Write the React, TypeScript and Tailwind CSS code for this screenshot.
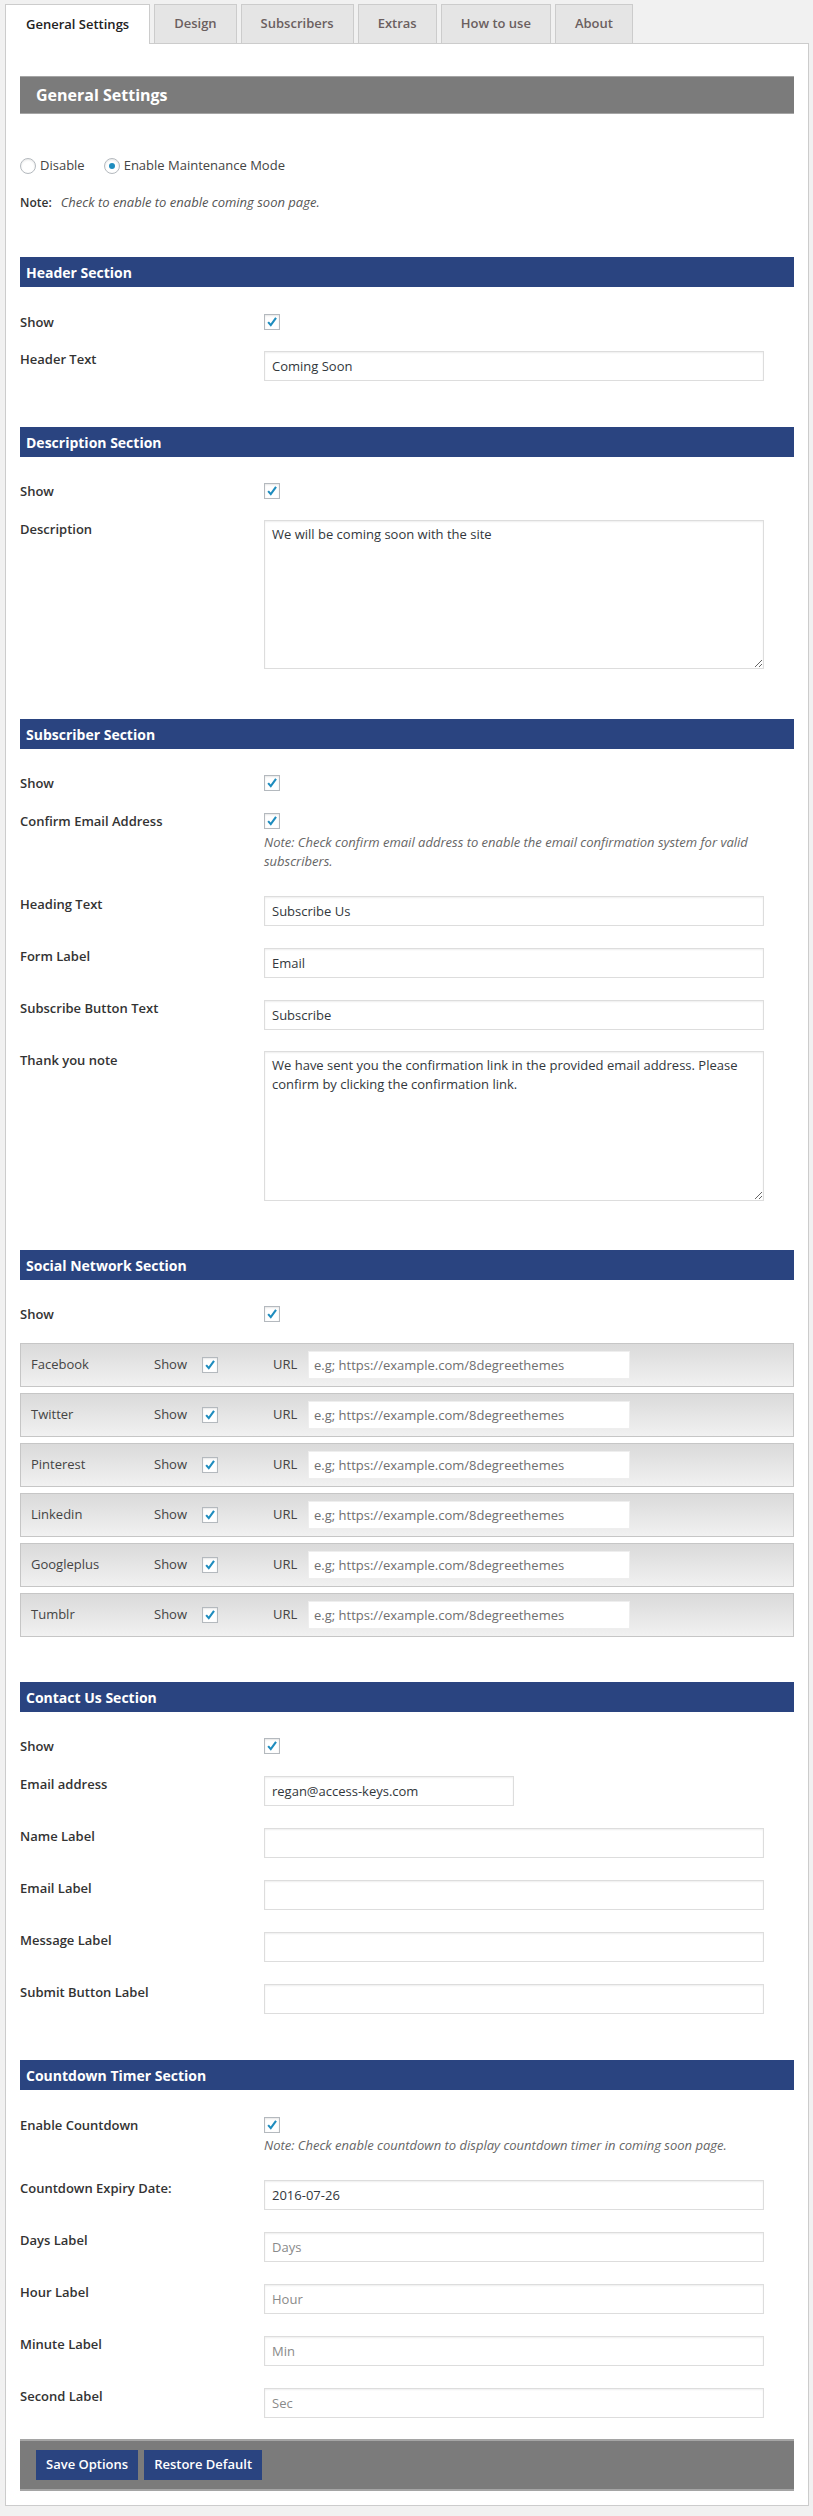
import React from "react";

const Check = () => (
  <span className="flex h-[16px] w-[16px] items-center justify-center border border-[#b4b9be] bg-white shadow-[inset_0_1px_2px_rgba(0,0,0,0.1)]">
    <svg width="14" height="14" viewBox="0 0 16 16">
      <path d="M3.6 8.2 L6.6 11.6 L12.6 3.4" fill="none" stroke="#1e8cbe" strokeWidth="2.4" strokeLinejoin="miter" />
    </svg>
  </span>
);

const Bar = ({ title, mt }: { title: string; mt: string }) => (
  <div className={`${mt} flex h-[30px] items-center bg-[#2a4480] pl-[6px] text-[14px] font-bold text-white`}>{title}</div>
);

const CheckRow = ({ label, mt, note }: { label: string; mt: string; note?: React.ReactNode }) => (
  <div className={`${mt} flex items-start`}>
    <div className="w-[244px] shrink-0 text-[13px] font-semibold leading-[16px] text-[#333]">{label}</div>
    <div className="flex flex-col">
      <Check />
      {note}
    </div>
  </div>
);

const InputRow = ({
  label,
  mt,
  value,
  placeholder,
  w = "w-[500px]",
}: {
  label: string;
  mt: string;
  value?: string;
  placeholder?: string;
  w?: string;
}) => (
  <div className={`${mt} flex items-start`}>
    <div className="w-[244px] shrink-0 text-[13px] font-semibold leading-[16px] text-[#333]">{label}</div>
    <input
      readOnly
      value={value ?? ""}
      placeholder={placeholder}
      className={`${w} h-[30px] border border-[#ddd] bg-white px-[7px] text-[13px] text-[#32373c] shadow-[inset_0_1px_2px_rgba(0,0,0,0.07)] outline-none placeholder:text-[#8a8a8a]`}
    />
  </div>
);

const TextRow = ({ label, mt, value, h }: { label: string; mt: string; value: string; h: string }) => (
  <div className={`${mt} flex items-start`}>
    <div className="w-[244px] shrink-0 pt-[1px] text-[13px] font-semibold leading-[16px] text-[#333]">{label}</div>
    <textarea
      readOnly
      value={value}
      className={`${h} w-[500px] border border-[#ddd] bg-white px-[7px] py-[4px] text-[13px] leading-[19px] text-[#32373c] shadow-[inset_0_1px_2px_rgba(0,0,0,0.07)] outline-none`}
    />
  </div>
);

const socials = ["Facebook", "Twitter", "Pinterest", "Linkedin", "Googleplus", "Tumblr"];

const tabs = ["General Settings", "Design", "Subscribers", "Extras", "How to use", "About"];

export default function App() {
  return (
    <div className="min-h-[2516px] bg-[#f1f1f1] pb-[10px] pl-[5px] pr-[4px] pt-[4px] font-['Open_Sans',sans-serif] text-[13px] text-[#333]">
      <div className="flex items-end gap-[4px]">
        {tabs.map((t, i) =>
          i === 0 ? (
            <div
              key={t}
              className="relative z-10 -mb-px flex h-[40px] items-center border border-b-0 border-[#ccc] bg-white px-[20px] text-[13px] font-semibold text-[#222]"
            >
              {t}
            </div>
          ) : (
            <div
              key={t}
              className="flex h-[39px] items-center border border-b-0 border-[#ccc] bg-[#e5e5e5] px-[19px] text-[13px] font-semibold text-[#6b5f5f]"
            >
              {t}
            </div>
          )
        )}
      </div>
      <div className="border border-[#ccc] bg-white px-[14px] pb-[14px] pt-[32px]">
        <div className="flex h-[38px] items-center border-y border-[#a5a5a5] bg-[#7b7b7b] pl-[16px] text-[16px] font-bold text-white">
          General Settings
        </div>
        <div className="mt-[44px] flex h-[16px] items-center text-[13px] text-[#444]">
          <span className="h-[16px] w-[16px] rounded-full border border-[#b4b9be] bg-white shadow-[inset_0_1px_2px_rgba(0,0,0,0.1)]" />
          <span className="ml-[4px]">Disable</span>
          <span className="ml-[19px] flex h-[16px] w-[16px] items-center justify-center rounded-full border border-[#b4b9be] bg-white shadow-[inset_0_1px_2px_rgba(0,0,0,0.1)]">
            <span className="h-[6px] w-[6px] rounded-full bg-[#1e8cbe]" />
          </span>
          <span className="ml-[4px]">Enable Maintenance Mode</span>
        </div>
        <div className="mt-[20px] flex h-[18px] items-center">
          <span className="text-[12px] font-semibold text-[#333]">Note:</span>
          <span className="ml-[9px] text-[13px] italic text-[#555]">Check to enable to enable coming soon page.</span>
        </div>

        <Bar title="Header Section" mt="mt-[45px]" />
        <CheckRow label="Show" mt="mt-[27px]" />
        <InputRow label="Header Text" mt="mt-[21px]" value="Coming Soon" />

        <Bar title="Description Section" mt="mt-[46px]" />
        <CheckRow label="Show" mt="mt-[26px]" />
        <TextRow label="Description" mt="mt-[21px]" value="We will be coming soon with the site" h="h-[149px]" />

        <Bar title="Subscriber Section" mt="mt-[50px]" />
        <CheckRow label="Show" mt="mt-[26px]" />
        <CheckRow
          label="Confirm Email Address"
          mt="mt-[22px]"
          note={
            <p className="mt-[4px] w-[515px] text-[13px] italic leading-[19px] text-[#666]">
              Note: Check confirm email address to enable the email confirmation system for valid subscribers.
            </p>
          }
        />
        <InputRow label="Heading Text" mt="mt-[25px]" value="Subscribe Us" />
        <InputRow label="Form Label" mt="mt-[22px]" value="Email" />
        <InputRow label="Subscribe Button Text" mt="mt-[22px]" value="Subscribe" />
        <TextRow
          label="Thank you note"
          mt="mt-[21px]"
          value="We have sent you the confirmation link in the provided email address. Please confirm by clicking the confirmation link."
          h="h-[150px]"
        />

        <Bar title="Social Network Section" mt="mt-[49px]" />
        <CheckRow label="Show" mt="mt-[26px]" />
        <div className="mt-[21px] flex flex-col gap-[6px]">
          {socials.map((s) => (
            <div
              key={s}
              className="flex h-[44px] items-center border border-[#c6c6c6] bg-gradient-to-b from-[#dadada] to-[#f1f1f1] pl-[10px] text-[13px] text-[#444]"
            >
              <span className="w-[123px] shrink-0">{s}</span>
              <span className="w-[48px] shrink-0">Show</span>
              <Check />
              <span className="ml-[55px] w-[35px] shrink-0">URL</span>
              <input
                readOnly
                placeholder="e.g; https://example.com/8degreethemes"
                className="h-[28px] w-[322px] border border-[#eee] bg-white px-[5px] text-[13px] outline-none placeholder:text-[#6f6f6f]"
              />
            </div>
          ))}
        </div>

        <Bar title="Contact Us Section" mt="mt-[45px]" />
        <CheckRow label="Show" mt="mt-[26px]" />
        <InputRow label="Email address" mt="mt-[22px]" value="regan@access-keys.com" w="w-[250px]" />
        <InputRow label="Name Label" mt="mt-[22px]" />
        <InputRow label="Email Label" mt="mt-[22px]" />
        <InputRow label="Message Label" mt="mt-[22px]" />
        <InputRow label="Submit Button Label" mt="mt-[22px]" />

        <Bar title="Countdown Timer Section" mt="mt-[46px]" />
        <CheckRow
          label="Enable Countdown"
          mt="mt-[27px]"
          note={
            <p className="mt-[3px] w-[515px] text-[13px] italic leading-[19px] text-[#666]">
              Note: Check enable countdown to display countdown timer in coming soon page.
            </p>
          }
        />
        <InputRow label="Countdown Expiry Date:" mt="mt-[25px]" value="2016-07-26" />
        <InputRow label="Days Label" mt="mt-[22px]" placeholder="Days" />
        <InputRow label="Hour Label" mt="mt-[22px]" placeholder="Hour" />
        <InputRow label="Minute Label" mt="mt-[22px]" placeholder="Min" />
        <InputRow label="Second Label" mt="mt-[22px]" placeholder="Sec" />

        <div className="mt-[21px] flex h-[52px] items-center gap-[6px] border-y-2 border-[#a5a5a5] bg-[#7b7b7b] pl-[16px]">
          <button className="h-[30px] bg-[#2a4480] px-[10px] text-[13px] font-semibold text-white">Save Options</button>
          <button className="h-[30px] bg-[#2a4480] px-[10px] text-[13px] font-semibold text-white">Restore Default</button>
        </div>
      </div>
    </div>
  );
}
